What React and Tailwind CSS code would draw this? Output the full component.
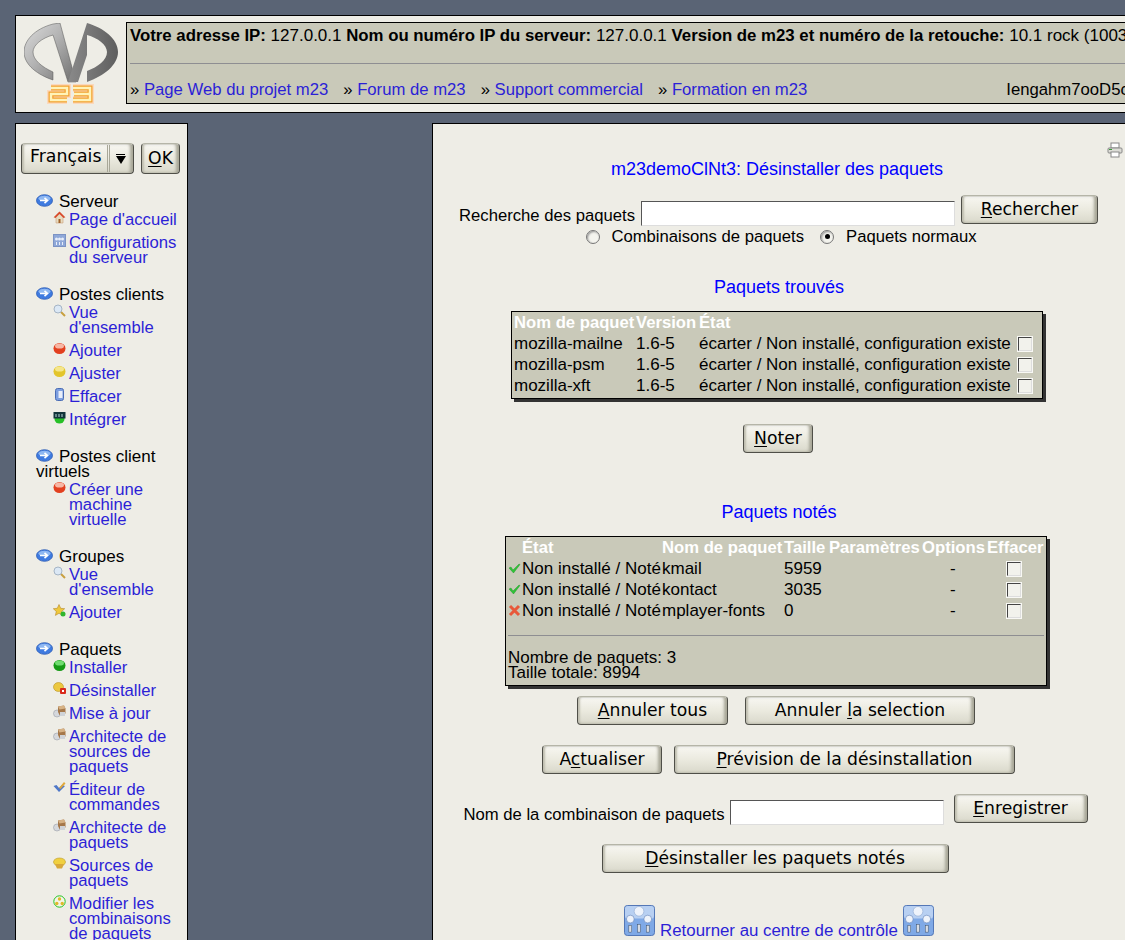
import React from "react";

// small sidebar/status icons, drawn on a 13x13 box
const ArrowBullet = () => (
  <svg width="17" height="13" viewBox="0 0 17 13" className="inline-block align-baseline">
    <ellipse cx="8.5" cy="6.5" rx="8" ry="5.8" fill="#3f7be0" stroke="#2a5bb5" strokeWidth="0.8" />
    <ellipse cx="8.5" cy="4.5" rx="6" ry="2.8" fill="#8fb8f2" />
    <path d="M4 6.5h7M8.5 3.8l3 2.7-3 2.7" stroke="#fff" strokeWidth="1.6" fill="none" />
  </svg>
);

const Ball = ({ top, bottom }) => (
  <svg width="13" height="13" viewBox="0 0 13 13">
    <ellipse cx="6.5" cy="6.5" rx="6" ry="5.5" fill={bottom} />
    <ellipse cx="6.5" cy="4" rx="4.5" ry="2.6" fill={top} />
  </svg>
);

const Icons = {
  home: (
    <svg width="13" height="13" viewBox="0 0 13 13">
      <path d="M6.5 1L1 6.5h2V12h7V6.5h2z" fill="#e8dcc0" stroke="#c9a078" strokeWidth="0.6" />
      <path d="M6.5 0.5L1 6l1.5 1 4-4 4 4 1.500-1z" fill="#d9482b" />
      <rect x="5.5" y="8" width="2" height="4" fill="#a0622a" />
    </svg>
  ),
  config: (
    <svg width="13" height="13" viewBox="0 0 13 13">
      <rect x="0.5" y="0.5" width="12" height="12" fill="#8fa8d8" stroke="#7c93c4" />
      <circle cx="3.5" cy="5" r="1.5" fill="#e8eefa" />
      <circle cx="6.5" cy="5" r="1.5" fill="#e8eefa" />
      <circle cx="9.5" cy="5" r="1.5" fill="#e8eefa" />
      <path d="M3.500 8v3M6.500 8v3M9.500 8v3" stroke="#e8eefa" />
    </svg>
  ),
  search: (
    <svg width="13" height="13" viewBox="0 0 13 13">
      <path d="M7.5 7.5L12 12" stroke="#c8a040" strokeWidth="2" />
      <circle cx="5" cy="5" r="4" fill="#dbe8f5" stroke="#a5b5c5" />
    </svg>
  ),
  red: <Ball top="#f7b7a5" bottom="#e2401f" />,
  yellow: <Ball top="#f5e68a" bottom="#e3c52c" />,
  green: <Ball top="#6fdc6f" bottom="#159a15" />,
  trash: (
    <svg width="13" height="13" viewBox="0 0 13 13">
      <rect x="2.5" y="0.5" width="8" height="12" rx="2" fill="#7d9fe0" stroke="#4a6db5" />
      <rect x="5.5" y="3" width="4" height="7" fill="#e8eefa" />
    </svg>
  ),
  integrate: (
    <svg width="13" height="13" viewBox="0 0 13 13">
      <ellipse cx="6.5" cy="8" rx="5" ry="4.5" fill="#27c027" />
      <rect x="0.5" y="1" width="12" height="6.5" fill="#12343a" />
      <path d="M3 3v3M6 3v3M9 3v3" stroke="#b8d8d8" />
    </svg>
  ),
  star: (
    <svg width="13" height="13" viewBox="0 0 13 13">
      <path d="M6 0.5l1.700 3.800 4 .4-3 2.700.9 4-3.600-2.100-3.600 2.100.9-4-3-2.700 4-.4z" fill="#efc83c" stroke="#b58a2a" strokeWidth="0.6" />
      <circle cx="10" cy="10" r="2.500" fill="#2fb52f" />
    </svg>
  ),
  remove: (
    <svg width="13" height="13" viewBox="0 0 13 13">
      <ellipse cx="5.5" cy="5" rx="5" ry="4.5" fill="#ecc840" stroke="#b8942a" strokeWidth="0.6" />
      <rect x="7" y="6" width="6" height="6" rx="1" fill="#d92a1c" />
      <rect x="9" y="8" width="2" height="2" fill="#fff" />
    </svg>
  ),
  box: (
    <svg width="13" height="13" viewBox="0 0 13 13">
      <circle cx="4" cy="8.500" r="3.500" fill="#d5d8dc" stroke="#9aa0a8" strokeWidth="0.6" />
      <path d="M5 1.500l6-1 1.500 3v5l-6 1.500-1.500-3z" fill="#a5784a" />
      <path d="M5 1.500l6-1 1.500 3-6 1z" fill="#d6b285" />
      <rect x="7" y="7" width="5" height="4" fill="#cfd3d8" />
    </svg>
  ),
  edit: (
    <svg width="13" height="13" viewBox="0 0 13 13">
      <path d="M0.5 5L6 11l6-6-3-1-3 3-2.500-3z" fill="#4f78c8" />
      <path d="M6 7l5-6 1.500 1.500L7.500 8z" fill="#e0a83a" />
    </svg>
  ),
  source: (
    <svg width="13" height="13" viewBox="0 0 13 13">
      <ellipse cx="6.5" cy="5" rx="6" ry="4" fill="#f0d040" stroke="#b89a2a" strokeWidth="0.6" />
      <path d="M2 7h9l-2 4.500H4z" fill="#d8a83a" />
    </svg>
  ),
  combo: (
    <svg width="13" height="13" viewBox="0 0 13 13">
      <circle cx="6.5" cy="6.5" r="5.7" fill="#f4f4e8" stroke="#22c522" />
      <circle cx="6.5" cy="4" r="1.7" fill="#e0b82a" />
      <circle cx="3.8" cy="8.500" r="1.7" fill="#e0b82a" />
      <circle cx="9.2" cy="8.500" r="1.7" fill="#e0b82a" />
    </svg>
  ),
};

const menu = [
  {
    title: "Serveur",
    gap: "mt-[20px]",
    items: [
      ["home", "Page d'accueil"],
      ["config", "Configurations du serveur"],
    ],
  },
  {
    title: "Postes clients",
    gap: "mt-[22px]",
    items: [
      ["search", "Vue d'ensemble"],
      ["red", "Ajouter"],
      ["yellow", "Ajuster"],
      ["trash", "Effacer"],
      ["integrate", "Intégrer"],
    ],
  },
  {
    title: "Postes client virtuels",
    gap: "mt-[22px]",
    items: [["red", "Créer une machine virtuelle"]],
  },
  {
    title: "Groupes",
    gap: "mt-[22px]",
    items: [
      ["search", "Vue d'ensemble"],
      ["star", "Ajouter"],
    ],
  },
  {
    title: "Paquets",
    gap: "mt-[22px]",
    items: [
      ["green", "Installer"],
      ["remove", "Désinstaller"],
      ["box", "Mise à jour"],
      ["box", "Architecte de sources de paquets"],
      ["edit", "Éditeur de commandes"],
      ["box", "Architecte de paquets"],
      ["source", "Sources de paquets"],
      ["combo", "Modifier les combinaisons de paquets"],
    ],
  },
];

const found = ["mozilla-mailne", "mozilla-psm", "mozilla-xft"];

const marked = [
  { ok: true, name: "kmail", size: "5959" },
  { ok: true, name: "kontact", size: "3035" },
  { ok: false, name: "mplayer-fonts", size: "0" },
];

const logo23 = "M27 65h16v6H27v6h16M49 65h17v6H50M66 71v6H49";

function Logo() {
  return (
    <svg width="98" height="82" viewBox="0 0 98 82">
      <defs>
        <linearGradient id="logoL" x1="0" y1="0" x2="1" y2="1">
          <stop offset="0" stopColor="#dcdcdc" />
          <stop offset="0.45" stopColor="#b2b2b2" />
          <stop offset="1" stopColor="#6e6e6e" />
        </linearGradient>
        <linearGradient id="logoR" x1="0" y1="0" x2="1" y2="0">
          <stop offset="0" stopColor="#8a8a8a" />
          <stop offset="1" stopColor="#5e5e5e" />
        </linearGradient>
      </defs>
      {/* left arc and first stroke of the M */}
      <path
        d="M29 1 C10 6 0 18 0 29 C0 42 14 52 29 57 L29 49 C18 44 9 37 9 29 C9 22 18 15 29 12 L44 59 L52 59 L36 0 Z"
        fill="url(#logoL)"
        stroke="#555"
        strokeWidth="0.5"
      />
      {/* second stroke and right arc */}
      <path
        d="M63 0 L44 59 L54 59 L63 32 L63 12 C74 15 83 22 83 29 C83 37 74 44 63 48 L63 59 C80 53 94 42 94 29 C94 16 80 5 63 0 Z"
        fill="url(#logoR)"
      />
      {/* the orange 23 */}
      <path d={logo23} stroke="#fbd9bd" strokeWidth="8" fill="none" />
      <path d={logo23} stroke="#f2a02e" strokeWidth="5" fill="none" />
      <path d={logo23} stroke="#fff3b8" strokeWidth="2.5" fill="none" />
    </svg>
  );
}

function ControlIcon() {
  return (
    <svg width="31" height="31" viewBox="0 0 32 32" className="inline-block shrink-0">
      <rect x="0.5" y="0.5" width="31" height="31" rx="3" fill="#7fa9e6" stroke="#4f74b5" />
      <rect x="1" y="1" width="30" height="13" rx="3" fill="#b8d0f2" />
      <circle cx="15.5" cy="6.5" r="5" fill="#eef3fb" stroke="#8aa5cf" strokeWidth="0.6" />
      <circle cx="6.5" cy="14.5" r="4" fill="#eef3fb" stroke="#5f7fb5" strokeWidth="0.6" />
      <circle cx="24.5" cy="14.5" r="4" fill="#eef3fb" stroke="#5f7fb5" strokeWidth="0.6" />
      <rect x="5" y="21" width="3" height="7" fill="#d8dde5" stroke="#3a4a60" strokeWidth="0.5" />
      <rect x="14" y="20" width="3" height="8" fill="#d8dde5" stroke="#3a4a60" strokeWidth="0.5" />
      <rect x="23" y="21" width="3" height="7" fill="#d8dde5" stroke="#3a4a60" strokeWidth="0.5" />
    </svg>
  );
}

function Check() {
  return (
    <svg width="13" height="13" viewBox="0 0 13 13" className="shrink-0">
      <path d="M1 6l2-1 2 3 6-6 1 .5L5.500 11z" fill="#2ec436" stroke="#1a8a20" strokeWidth="0.4" />
    </svg>
  );
}

function Cross() {
  return (
    <svg width="13" height="13" viewBox="0 0 13 13" className="shrink-0">
      <path d="M2 2l9 9M11 2l-9 9" stroke="#e8583a" strokeWidth="3" />
    </svg>
  );
}

function Box() {
  return (
    <span className="inline-block w-[14px] h-[14px] bg-[#f2f2ec] border border-t-[#444] border-l-[#444] border-r-[#ddd] border-b-[#ddd] shadow-[0_0_0_1px_#f8f8f4]" />
  );
}

function Radio({ on }) {
  return (
    <span className="w-[14px] h-[14px] rounded-full border border-[#777] bg-[#f4f4ee] shadow-[inset_1px_1px_2px_#999] flex items-center justify-center">
      {on && <span className="w-[5px] h-[5px] bg-black rounded-full" />}
    </span>
  );
}

function Btn({ w, u, before = "", after = "", className = "" }) {
  return (
    <button
      className={`h-[29px] shrink-0 rounded-[4px] border border-[#4f4f48] border-t-[#b5b5a8] bg-gradient-to-b from-[#f8f7f2] via-[#ebeadf] to-[#d9d8cb] shadow-[inset_2px_0_2px_#bfbeb0,inset_-3px_0_3px_#a8a798,inset_0_2px_1px_#ffffff] text-[17.2px] leading-none text-black font-['DejaVu_Sans',sans-serif] ${w} ${className}`}
    >
      {before}
      <span className="underline underline-offset-2">{u}</span>
      {after}
    </button>
  );
}

function Sidebar() {
  return (
    <aside className="w-[173px] h-[830px] shrink-0 border border-black bg-[#eeede6] pl-[5px] overflow-hidden">
      <div className="flex gap-[7px] mt-[19px]">
        <div className="w-[113px] h-[31px] rounded-[4px] border border-[#4f4f48] border-t-[#b5b5a8] bg-gradient-to-b from-[#f8f7f2] via-[#ebeadf] to-[#d9d8cb] shadow-[inset_2px_0_2px_#bfbeb0,inset_-3px_0_3px_#a8a798,inset_0_2px_1px_#ffffff] flex items-center text-[17.33px] font-['DejaVu_Sans',sans-serif] pl-[8px]">
          <span className="pb-[3px]">Français</span>
          <span className="ml-auto mr-[2px] w-[24px] h-[27px] border-l-[3px] border-double border-[#a8a798] flex flex-col items-center justify-center">
            <span className="w-[9px] h-px bg-black mb-px" />
            <span className="w-0 h-0 border-x-[5px] border-x-transparent border-t-[8px] border-t-black" />
          </span>
        </div>
        <Btn w="w-[39px] !h-[31px]" u="O" after="K" />
      </div>
      {menu.map((group) => (
        <div key={group.title} className={`${group.gap} pl-[15px] pr-[6px]`}>
          <div className="text-[17px] leading-[15px] text-black">
            <ArrowBullet />
            <span className="ml-[6px]">{group.title}</span>
          </div>
          <ul className="mt-[3px] flex flex-col gap-[8px]">
            {group.items.map(([icon, label], i) => (
              <li key={i} className="flex">
                <span className="w-[33px] shrink-0 pl-[17px] -mt-[1px]">{Icons[icon]}</span>
                <a className="text-[16.67px] leading-[15px] text-[#2c1fd6]">{label}</a>
              </li>
            ))}
          </ul>
        </div>
      ))}
    </aside>
  );
}

function FoundTable() {
  return (
    <div className="w-[532px] h-[88px] mt-[13px] border border-black bg-[#c9c9b9] shadow-[3px_3px_0_#333] pl-[2px] text-[17px] leading-[21px]">
      <div className="flex font-bold text-white text-[16.67px] whitespace-nowrap">
        <span className="w-[122px]">Nom de paquet</span>
        <span className="w-[63px]">Version</span>
        <span>État</span>
      </div>
      {found.map((name) => (
        <div key={name} className="flex items-center text-black">
          <span className="w-[122px]">{name}</span>
          <span className="w-[63px]">1.6-5</span>
          <span className="w-[319px]">écarter / Non installé, configuration existe</span>
          <Box />
        </div>
      ))}
    </div>
  );
}

function MarkedTable() {
  return (
    <div className="w-[542px] h-[150px] mt-[13px] mr-[2px] border border-black bg-[#c9c9b9] shadow-[3px_3px_0_#333] px-[2px] text-[17px] leading-[21px]">
      <div className="flex font-bold text-white text-[16.67px] whitespace-nowrap pl-[14px]">
        <span className="w-[140px]">État</span>
        <span className="w-[122px]">Nom de paquet</span>
        <span className="w-[45px]">Taille</span>
        <span className="w-[93px]">Paramètres</span>
        <span className="w-[65px]">Options</span>
        <span>Effacer</span>
      </div>
      {marked.map((row) => (
        <div key={row.name} className="flex items-center text-black">
          <span className="w-[14px] shrink-0">{row.ok ? <Check /> : <Cross />}</span>
          <span className="w-[140px]">Non installé / Noté</span>
          <span className="w-[122px]">{row.name}</span>
          <span className="w-[166px]">{row.size}</span>
          <span className="w-[57px]">-</span>
          <Box />
        </div>
      ))}
      <hr className="mt-[14px] border-t border-[#8e8e92]" />
      <div className="mt-[14px] leading-[15px] text-black">
        Nombre de paquets: 3
        <br />
        Taille totale: 8994
      </div>
    </div>
  );
}

export default function App() {
  return (
    <div className="w-[1125px] h-[940px] overflow-hidden bg-[#5a6475] pt-[15px] pl-[15px] font-['Liberation_Sans',sans-serif] text-black">
      {/* ── Header ── */}
      <header className="w-[1200px] h-[98px] border border-black bg-[#eeede6] flex items-start">
        <div className="w-[110px] shrink-0 pl-[8px] pt-[7px]">
          <Logo />
        </div>
        <div className="mt-[6px] h-[82px] flex-1 border border-black bg-[#c9c9b9] pl-[3px] text-[17px] whitespace-nowrap flex flex-col">
          <div className="leading-[21px] pt-[2px]">
            <b className="text-[16.8px]">Votre adresse IP:</b> 127.0.0.1{" "}
            <b className="text-[16.8px]">Nom ou numéro IP du serveur:</b> 127.0.0.1{" "}
            <b className="text-[16.8px]">Version de m23 et numéro de la retouche:</b> 10.1 rock (1003)
          </div>
          <hr className="mt-[17px] border-t border-[#8e8e92]" />
          <div className="mt-[15px] leading-[21px] flex text-[16.7px]">
            {["Page Web du projet m23", "Forum de m23", "Support commercial", "Formation en m23"].map((t) => (
              <span key={t} className="mr-[15px]">
                » <a className="text-[#2c1fd6]">{t}</a>
              </span>
            ))}
            <span className="ml-[184px]">Iengahm7ooD5c</span>
          </div>
        </div>
      </header>

      <div className="flex mt-[10px] items-start">
        <Sidebar />

        {/* ── Main panel ── */}
        <main className="ml-[244px] w-[700px] h-[830px] shrink-0 border border-black bg-[#eeede6] pr-[10px] flex flex-col items-center relative text-[16.67px]">
          <svg width="16" height="16" viewBox="0 0 16 16" className="absolute top-[18px] right-[8px]">
            <rect x="4" y="1" width="8" height="5" fill="#fff" stroke="#888" />
            <rect x="1" y="6" width="14" height="5" rx="1" fill="#dcdcd6" stroke="#888" />
            <rect x="4" y="10" width="8" height="5" fill="#fff" stroke="#888" />
            <rect x="2" y="7" width="3" height="1" fill="#3a9a3a" />
          </svg>

          <h2 className="mt-[35px] text-[18px] leading-[21px] text-[#0000ff]">m23demoClNt3: Désinstaller des paquets</h2>

          <div className="mt-[15px] ml-[3px] flex items-start">
            <span className="mt-[10px] leading-[21px]">Recherche des paquets</span>
            <input readOnly className="mt-[6px] ml-[6px] w-[314px] h-[25px] bg-white border border-t-[#555] border-l-[#555] border-r-[#ddd] border-b-[#ddd]" />
            <Btn w="w-[137px]" className="ml-[6px]" u="R" after="echercher" />
          </div>

          <div className="ml-[9px] flex items-center leading-[21px]">
            <Radio />
            <span className="ml-[11px]">Combinaisons de paquets</span>
            <span className="ml-[16px]">
              <Radio on />
            </span>
            <span className="ml-[12px]">Paquets normaux</span>
          </div>

          <h3 className="mt-[30px] ml-[4px] text-[18px] leading-[21px] text-[#0000ff]">Paquets trouvés</h3>
          <FoundTable />

          <Btn w="w-[70px]" className="mt-[25px] ml-[2px]" u="N" after="oter" />

          <h3 className="mt-[49px] ml-[4px] text-[18px] leading-[21px] text-[#0000ff]">Paquets notés</h3>
          <MarkedTable />

          <div className="mt-[10px] mr-[2px] flex gap-[17px]">
            <Btn w="w-[151px]" u="A" after="nnuler tous" />
            <Btn w="w-[230px]" before="Annuler " u="l" after="a selection" />
          </div>

          <div className="mt-[20px] ml-[3px] flex gap-[12px]">
            <Btn w="w-[120px]" before="A" u="c" after="tualiser" />
            <Btn w="w-[341px]" u="P" after="révision de la désinstallation" />
          </div>

          <div className="mt-[20px] mr-[3px] flex items-start">
            <span className="mt-[10px] leading-[21px]">Nom de la combinaison de paquets</span>
            <input readOnly className="mt-[6px] ml-[5px] w-[214px] h-[25px] bg-white border border-t-[#555] border-l-[#555] border-r-[#ddd] border-b-[#ddd]" />
            <Btn w="w-[134px]" className="ml-[10px]" u="E" after="nregistrer" />
          </div>

          <Btn w="w-[347px]" className="mt-[19px] mr-[4px]" u="D" after="ésinstaller les paquets notés" />

          <div className="mt-[32px] ml-[4px] flex items-baseline gap-[5px] text-[16.85px]">
            <ControlIcon />
            <a className="text-[#2c1fd6] leading-[18px] whitespace-nowrap">Retourner au centre de contrôle</a>
            <ControlIcon />
          </div>
        </main>
      </div>
    </div>
  );
}
